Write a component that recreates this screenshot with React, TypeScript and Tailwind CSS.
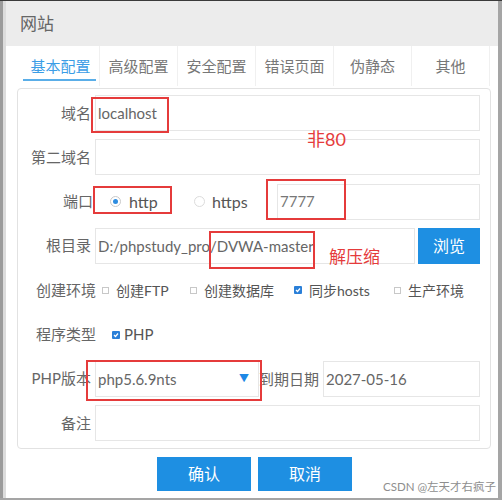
import React from "react";

const tabs = ["基本配置", "高级配置", "安全配置", "错误页面", "伪静态", "其他"];

function Check({ checked }: { checked?: boolean }) {
  if (checked) {
    return (
      <span className="w-[8px] h-[8px] bg-[#2a7fd8] rounded-[1px] flex items-center justify-center shrink-0">
        <svg width="6" height="6" viewBox="0 0 6 6">
          <path d="M1 3 L2.5 4.5 L5 1.5" stroke="white" strokeWidth="1.2" fill="none" />
        </svg>
      </span>
    );
  }
  return <span className="w-[7px] h-[7px] border border-[#c8c8c8] bg-white shrink-0" />;
}

function Label({ children, w = "w-[73px]" }: { children: React.ReactNode; w?: string }) {
  return <div className={`${w} shrink-0 text-right text-[15px] text-[#666] leading-none`}>{children}</div>;
}

function Input({ children, className = "" }: { children?: React.ReactNode; className?: string }) {
  return (
    <div className={`h-[36px] border border-[#e6e6e6] bg-white flex items-center pl-[2px] text-[15px] text-[#666] ${className}`}>
      {children}
    </div>
  );
}

export default function App() {
  return (
    <div className="relative w-[502px] h-[500px] bg-white overflow-hidden flex flex-col font-['Lato','Noto_Sans_CJK_SC',sans-serif]">
      <div className="h-[1px] bg-[#3a3a3a] shrink-0" />
      <div className="flex flex-1 min-h-0">
        <div className="w-[3px] bg-[#9b9b9b] shrink-0" />
        <div className="w-[3px] bg-[#dcdcdc] shrink-0" />
        <div className="flex-1 flex flex-col">
          <div className="h-[45px] bg-[#ececec] flex items-center pl-[14px] text-[17px] text-[#666] shrink-0">网站</div>
          <div className="h-[40px] flex pl-[16px] shrink-0">
            {tabs.map((t, i) => (
              <div
                key={t}
                className={`relative w-[78px] flex items-center justify-center border-r border-[#f0f0f0] text-[15px] ${
                  i === 0 ? "text-[#3b9de6]" : "text-[#777]"
                }`}
              >
                {t}
                {i === 0 && <div className="absolute left-[1px] right-[3px] bottom-[5px] h-[2px] bg-[#5aaee8]" />}
              </div>
            ))}
          </div>
          <div className="ml-[11px] w-[474px] mt-[2px] border border-[#e2e2e2] rounded-[4px] pt-[6px] pb-[7px] pr-[10px] flex flex-col gap-[8.33px]">
            <div className="flex items-center h-[36px]">
              <Label>域名</Label>
              <Input className="flex-1 ml-[4px]">localhost</Input>
            </div>
            <div className="flex items-center h-[36px]">
              <Label>第二域名</Label>
              <Input className="flex-1 ml-[4px]" />
            </div>
            <div className="flex items-center h-[36px]">
              <Label w="w-[75px]">端口</Label>
              <span className="ml-[17px] w-[11px] h-[11px] rounded-full border border-[#c9c9c9] flex items-center justify-center shrink-0">
                <span className="w-[5px] h-[5px] rounded-full bg-[#2d8ce0]" />
              </span>
              <span className="ml-[8px] text-[16px] text-[#555] w-[65px] shrink-0">http</span>
              <span className="w-[11px] h-[11px] rounded-full border border-[#dcdcdc] shrink-0" />
              <span className="ml-[7px] text-[16px] text-[#555] w-[54px] shrink-0">https</span>
              <Input className="flex-1 ml-[11px] text-[#777]">7777</Input>
            </div>
            <div className="flex items-center h-[36px]">
              <Label>根目录</Label>
              <Input className="flex-1 ml-[4px]">D:/phpstudy_pro/DVWA-master</Input>
              <div className="ml-[3px] w-[62px] h-[36px] bg-[#1e8fe2] text-white text-[16px] flex items-center justify-center">浏览</div>
            </div>
            <div className="flex items-center h-[36px] text-[14px] text-[#555]">
              <Label w="w-[78px]">创建环境</Label>
              <div className="ml-[6px] w-[88px] flex items-center gap-[7px]">
                <Check />
                <span>创建FTP</span>
              </div>
              <div className="w-[104px] flex items-center gap-[7px]">
                <Check />
                <span>创建数据库</span>
              </div>
              <div className="w-[100px] flex items-center gap-[7px]">
                <Check checked />
                <span>同步hosts</span>
              </div>
              <div className="flex items-center gap-[7px]">
                <Check />
                <span>生产环境</span>
              </div>
            </div>
            <div className="flex items-center h-[36px]">
              <Label w="w-[78px]">程序类型</Label>
              <div className="ml-[16px] flex items-center gap-[4px] text-[15px] text-[#555]">
                <Check checked />
                <span>PHP</span>
              </div>
            </div>
            <div className="flex items-center h-[36px]">
              <Label>PHP版本</Label>
              <Input className="ml-[4px] w-[164px] justify-between pr-[9px]">
                <span>php5.6.9nts</span>
                <span className="text-[#1e88e5] text-[10px]">▼</span>
              </Input>
              <div className="w-[64px] shrink-0 text-right text-[15px] text-[#666] pr-[5px] whitespace-nowrap">到期日期</div>
              <Input className="flex-1">2027-05-16</Input>
            </div>
            <div className="flex items-center h-[36px]">
              <Label>备注</Label>
              <Input className="flex-1 ml-[4px]" />
            </div>
          </div>
          <div className="flex pl-[151px] mt-[8px] gap-[7px]">
            <div className="w-[94px] h-[34px] bg-[#1e8fe2] text-white text-[16px] flex items-center justify-center">确认</div>
            <div className="w-[94px] h-[34px] bg-[#1e8fe2] text-white text-[16px] flex items-center justify-center">取消</div>
          </div>
        </div>
        <div className="w-[4px] bg-[#a5a5a5] shrink-0" />
      </div>
      <div className="h-[2px] bg-[#a5a5a5] shrink-0" />

      {/* annotations */}
      <div className="absolute left-[91px] top-[97px] w-[78px] h-[36px] border-2 border-[#e53b3b]" />
      <div className="absolute left-[93px] top-[186px] w-[79px] h-[28px] border-2 border-[#e53b3b]" />
      <div className="absolute left-[266px] top-[179px] w-[80px] h-[41px] border-2 border-[#e53b3b]" />
      <div className="absolute left-[209px] top-[231px] w-[106px] h-[38px] border-2 border-[#e53b3b]" />
      <div className="absolute left-[86px] top-[360px] w-[176px] h-[41px] border-2 border-[#e53b3b]" />
      <div className="absolute left-[307px] top-[130px] text-[18px] text-[#e53b3b] leading-none">非80</div>
      <div className="absolute left-[329px] top-[248px] text-[17px] text-[#e53b3b] leading-none">解压缩</div>
      <div className="absolute left-[383px] top-[481px] text-[11.5px] text-[#8e8e8e] leading-none whitespace-nowrap">CSDN @左天才右疯子</div>
    </div>
  );
}
